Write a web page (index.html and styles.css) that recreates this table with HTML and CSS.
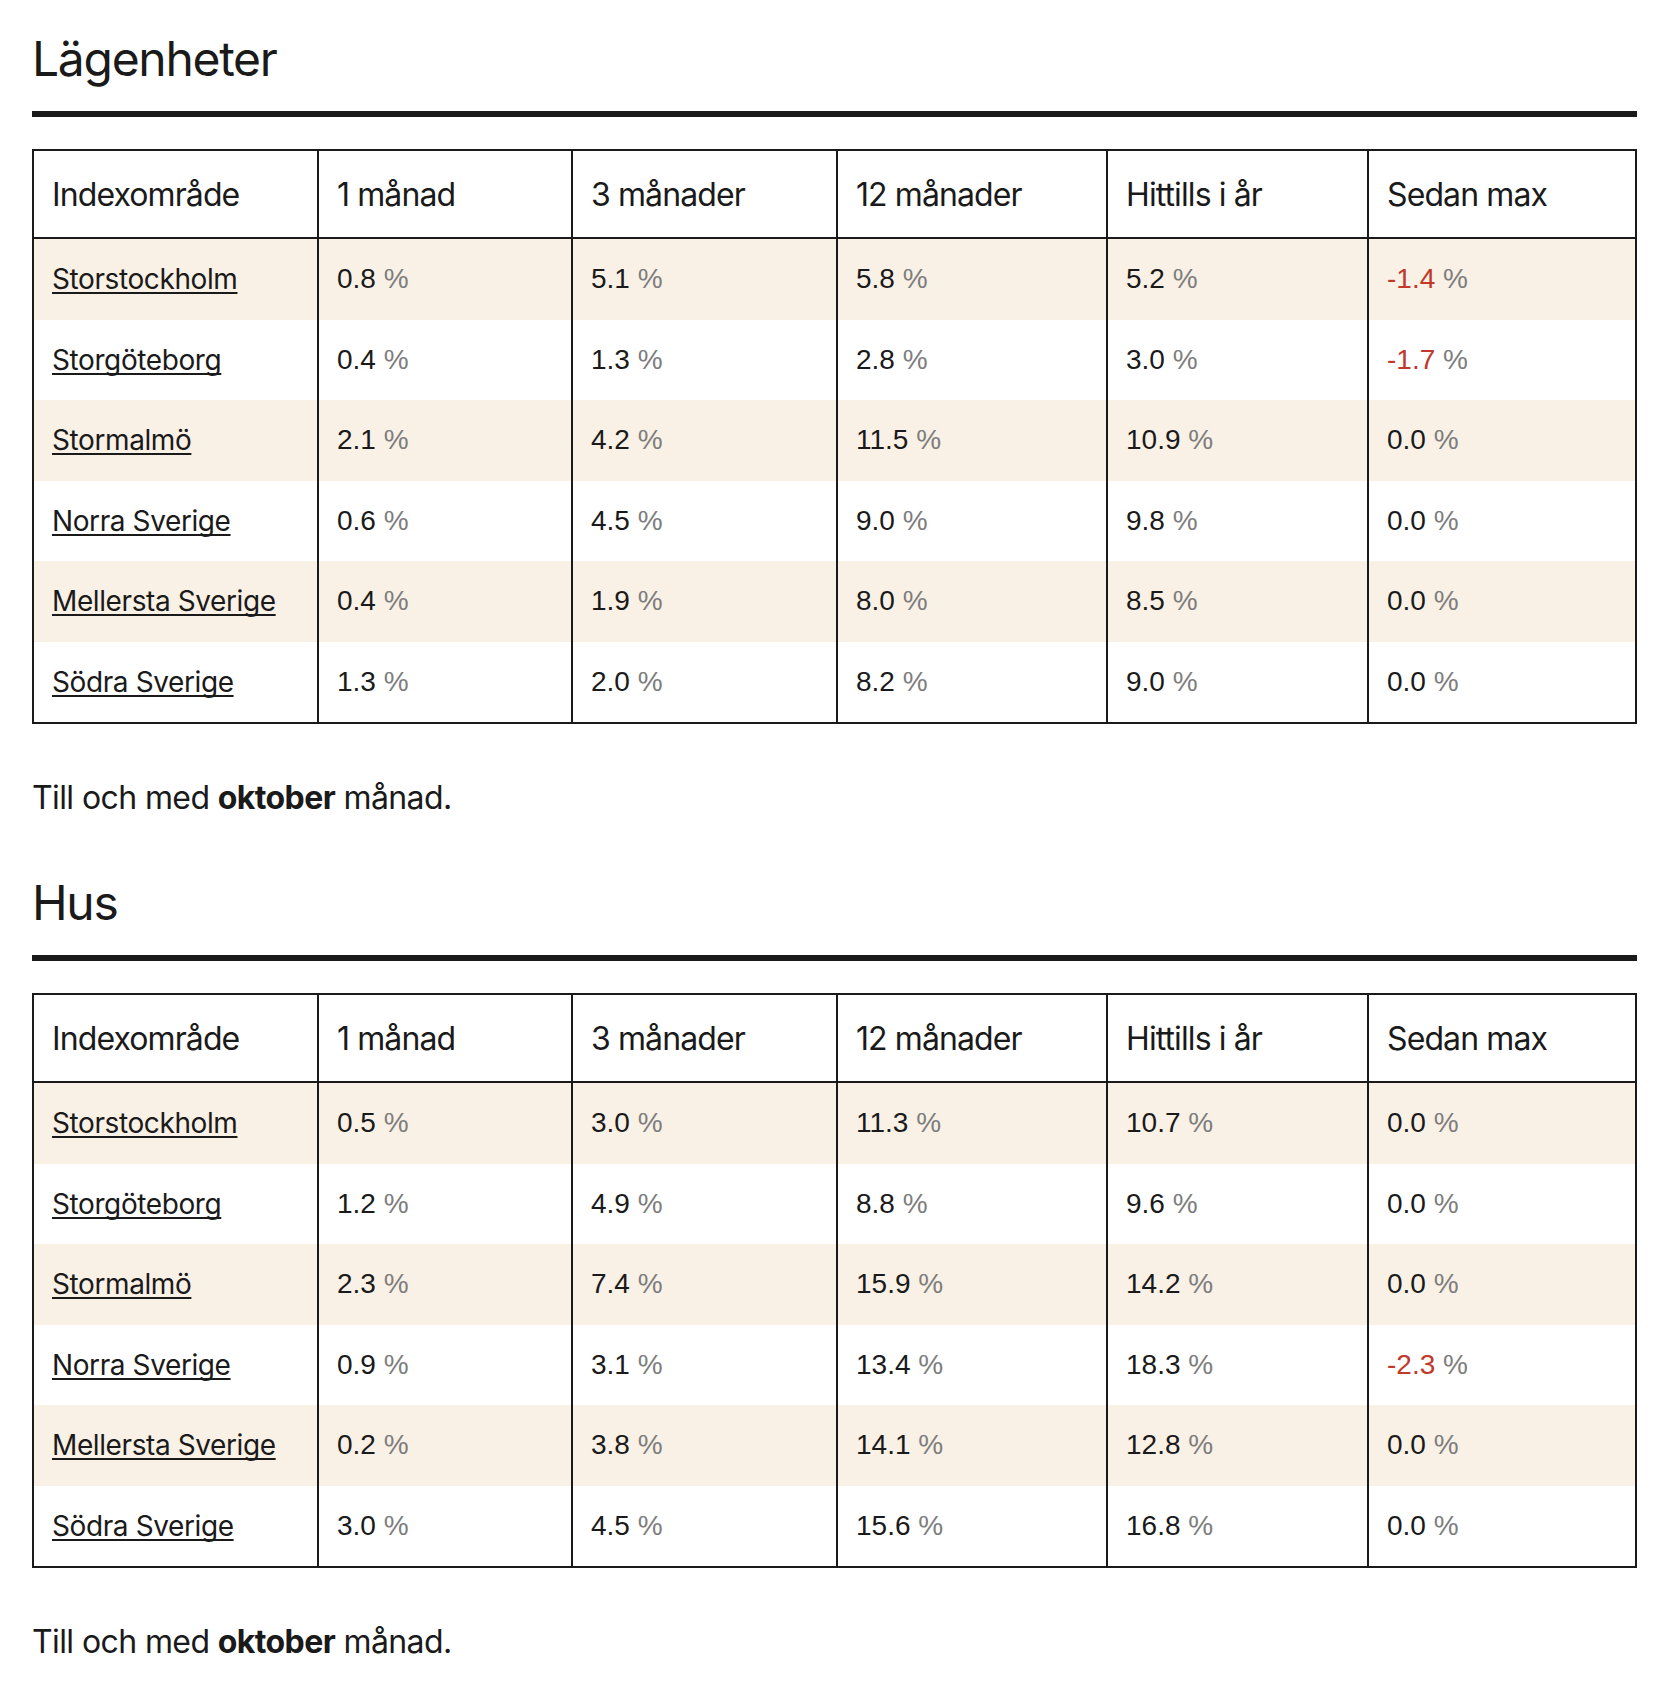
FILE: index.html
```html
<!DOCTYPE html>
<html lang="sv">
<head>
<meta charset="utf-8">
<title>Index</title>
<link rel="stylesheet" href="styles.css">
</head>
<body>
<main class="page">
  <section class="block">
    <h2 class="block-title">Lägenheter</h2>
    <table class="idx">
      <colgroup>
        <col class="c-area"><col class="c-1"><col class="c-3"><col class="c-12"><col class="c-ytd"><col class="c-max">
      </colgroup>
      <thead>
        <tr><th>Indexområde</th><th>1 månad</th><th>3 månader</th><th>12 månader</th><th>Hittills i år</th><th>Sedan max</th></tr>
      </thead>
      <tbody>
        <tr><td><a href="#">Storstockholm</a></td><td class="num">0.8 <span class="pct">%</span></td><td class="num">5.1 <span class="pct">%</span></td><td class="num">5.8 <span class="pct">%</span></td><td class="num">5.2 <span class="pct">%</span></td><td class="num"><span class="neg">-1.4</span> <span class="pct">%</span></td></tr>
        <tr><td><a href="#">Storgöteborg</a></td><td class="num">0.4 <span class="pct">%</span></td><td class="num">1.3 <span class="pct">%</span></td><td class="num">2.8 <span class="pct">%</span></td><td class="num">3.0 <span class="pct">%</span></td><td class="num"><span class="neg">-1.7</span> <span class="pct">%</span></td></tr>
        <tr><td><a href="#">Stormalmö</a></td><td class="num">2.1 <span class="pct">%</span></td><td class="num">4.2 <span class="pct">%</span></td><td class="num">11.5 <span class="pct">%</span></td><td class="num">10.9 <span class="pct">%</span></td><td class="num">0.0 <span class="pct">%</span></td></tr>
        <tr><td><a href="#">Norra Sverige</a></td><td class="num">0.6 <span class="pct">%</span></td><td class="num">4.5 <span class="pct">%</span></td><td class="num">9.0 <span class="pct">%</span></td><td class="num">9.8 <span class="pct">%</span></td><td class="num">0.0 <span class="pct">%</span></td></tr>
        <tr><td><a href="#">Mellersta Sverige</a></td><td class="num">0.4 <span class="pct">%</span></td><td class="num">1.9 <span class="pct">%</span></td><td class="num">8.0 <span class="pct">%</span></td><td class="num">8.5 <span class="pct">%</span></td><td class="num">0.0 <span class="pct">%</span></td></tr>
        <tr><td><a href="#">Södra Sverige</a></td><td class="num">1.3 <span class="pct">%</span></td><td class="num">2.0 <span class="pct">%</span></td><td class="num">8.2 <span class="pct">%</span></td><td class="num">9.0 <span class="pct">%</span></td><td class="num">0.0 <span class="pct">%</span></td></tr>
      </tbody>
    </table>
    <p class="note">Till och med <strong>oktober</strong> månad.</p>
  </section>

  <section class="block">
    <h2 class="block-title">Hus</h2>
    <table class="idx">
      <colgroup>
        <col class="c-area"><col class="c-1"><col class="c-3"><col class="c-12"><col class="c-ytd"><col class="c-max">
      </colgroup>
      <thead>
        <tr><th>Indexområde</th><th>1 månad</th><th>3 månader</th><th>12 månader</th><th>Hittills i år</th><th>Sedan max</th></tr>
      </thead>
      <tbody>
        <tr><td><a href="#">Storstockholm</a></td><td class="num">0.5 <span class="pct">%</span></td><td class="num">3.0 <span class="pct">%</span></td><td class="num">11.3 <span class="pct">%</span></td><td class="num">10.7 <span class="pct">%</span></td><td class="num">0.0 <span class="pct">%</span></td></tr>
        <tr><td><a href="#">Storgöteborg</a></td><td class="num">1.2 <span class="pct">%</span></td><td class="num">4.9 <span class="pct">%</span></td><td class="num">8.8 <span class="pct">%</span></td><td class="num">9.6 <span class="pct">%</span></td><td class="num">0.0 <span class="pct">%</span></td></tr>
        <tr><td><a href="#">Stormalmö</a></td><td class="num">2.3 <span class="pct">%</span></td><td class="num">7.4 <span class="pct">%</span></td><td class="num">15.9 <span class="pct">%</span></td><td class="num">14.2 <span class="pct">%</span></td><td class="num">0.0 <span class="pct">%</span></td></tr>
        <tr><td><a href="#">Norra Sverige</a></td><td class="num">0.9 <span class="pct">%</span></td><td class="num">3.1 <span class="pct">%</span></td><td class="num">13.4 <span class="pct">%</span></td><td class="num">18.3 <span class="pct">%</span></td><td class="num"><span class="neg">-2.3</span> <span class="pct">%</span></td></tr>
        <tr><td><a href="#">Mellersta Sverige</a></td><td class="num">0.2 <span class="pct">%</span></td><td class="num">3.8 <span class="pct">%</span></td><td class="num">14.1 <span class="pct">%</span></td><td class="num">12.8 <span class="pct">%</span></td><td class="num">0.0 <span class="pct">%</span></td></tr>
        <tr><td><a href="#">Södra Sverige</a></td><td class="num">3.0 <span class="pct">%</span></td><td class="num">4.5 <span class="pct">%</span></td><td class="num">15.6 <span class="pct">%</span></td><td class="num">16.8 <span class="pct">%</span></td><td class="num">0.0 <span class="pct">%</span></td></tr>
      </tbody>
    </table>
    <p class="note">Till och med <strong>oktober</strong> månad.</p>
  </section>
</main>
</body>
</html>
```

FILE: styles.css
```css
html, body {
  margin: 0;
  padding: 0;
  background: #ffffff;
}

body {
  font-family: Inter, "Noto Sans", "Liberation Sans", sans-serif;
  color: #1a1a1a;
}

.page {
  padding: 0 31px 0 32px;
}

.block {
  margin: 0;
}

.block-title {
  margin: 0 0 32px 0;
  padding: 30px 0 23px 0;
  font-size: 48px;
  line-height: 58px;
  font-weight: 400;
  letter-spacing: -1.3px;
  border-bottom: 6px solid #1a1a1a;
}

.idx {
  width: 100%;
  border-collapse: collapse;
  table-layout: fixed;
  border: 2px solid #1a1a1a;
}

.c-area { width: 285px; }
.c-1 { width: 254px; }
.c-3 { width: 265px; }
.c-12 { width: 270px; }
.c-ytd { width: 261px; }
.c-max { width: auto; }

.idx th {
  text-align: left;
  font-weight: 400;
  font-size: 32px;
  line-height: 48px;
  letter-spacing: -0.9px;
  padding: 20px 18px 18px 18px;
  border: 2px solid #1a1a1a;
}

.idx td {
  font-size: 28px;
  line-height: 42px;
  letter-spacing: -0.4px;
  padding: 19.25px 18px;
  border-left: 2px solid #1a1a1a;
  border-right: 2px solid #1a1a1a;
}

.idx tbody tr:nth-child(odd) td {
  background: #faf1e6;
}

.idx a {
  color: #1a1a1a;
  text-decoration: underline;
  text-decoration-thickness: 1.5px;
  text-underline-offset: 3px;
  text-decoration-skip-ink: none;
}

.idx td.num {
  font-family: "Liberation Sans", Arial, sans-serif;
  font-size: 28px;
  letter-spacing: 0;
  color: #1a1a1a;
}

.pct {
  color: #7d7d7d;
}

.neg {
  color: #c0392b;
}

.note {
  margin: 50px 0 22px 0;
  font-size: 32px;
  line-height: 48px;
  letter-spacing: -0.6px;
}

.note strong {
  font-weight: 700;
}
```
